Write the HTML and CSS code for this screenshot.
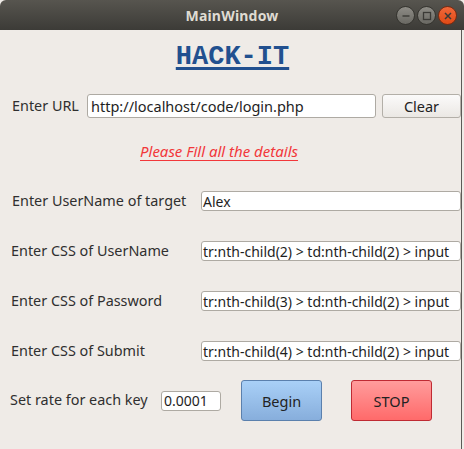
FILE: index.html
```html
<!DOCTYPE html>
<html>
<head>
<meta charset="utf-8">
<link rel="stylesheet" href="styles.css">
</head>
<body>
<div class="window">
  <div class="titlebar">
    <span class="title">MainWindow</span>
    <div class="controls">
      <span class="wbtn"><svg width="16" height="16" viewBox="0 0 16 16"><line x1="4.5" y1="8" x2="11.5" y2="8" stroke="#3b3a36" stroke-width="1.4"/></svg></span>
      <span class="wbtn"><svg width="16" height="16" viewBox="0 0 16 16"><rect x="4.5" y="4.5" width="7" height="7" fill="none" stroke="#3b3a36" stroke-width="1.3"/></svg></span>
      <span class="wbtn close"><svg width="16" height="16" viewBox="0 0 16 16"><path d="M5 5 L11 11 M11 5 L5 11" stroke="#3b3a36" stroke-width="1.5"/></svg></span>
    </div>
  </div>
  <div class="content">
    <div class="heading"><span class="brand">HACK-IT</span></div>
    <div class="row url-row">
      <span class="label url-label">Enter URL</span>
      <div class="field url-field">http://localhost/code/login.php</div>
      <div class="btn clear">Clear</div>
    </div>
    <div class="error-row"><span class="error">Please Fill all the details</span></div>
    <div class="row form-row first">
      <span class="label wide">Enter UserName of target</span>
      <div class="field small">Alex</div>
    </div>
    <div class="row form-row">
      <span class="label wide css">Enter CSS of UserName</span>
      <div class="field small">tr:nth-child(2) &gt; td:nth-child(2) &gt; input</div>
    </div>
    <div class="row form-row">
      <span class="label wide css">Enter CSS of Password</span>
      <div class="field small">tr:nth-child(3) &gt; td:nth-child(2) &gt; input</div>
    </div>
    <div class="row form-row">
      <span class="label wide css">Enter CSS of Submit</span>
      <div class="field small">tr:nth-child(4) &gt; td:nth-child(2) &gt; input</div>
    </div>
    <div class="row rate-row">
      <span class="label rate-label">Set rate for each key</span>
      <div class="field small rate">0.0001</div>
      <div class="btn begin">Begin</div>
      <div class="btn stop">STOP</div>
    </div>
  </div>
</div>
</body>
</html>
```

FILE: styles.css
```css
html, body {
  margin: 0;
  padding: 0;
  background: #efebe7;
}
body {
  width: 464px;
  height: 449px;
  overflow: hidden;
  font-family: "Noto Sans", "DejaVu Sans", sans-serif;
  font-size: 14px;
  color: #2f2f2f;
}
.window {
  width: 464px;
  height: 449px;
  display: flex;
  flex-direction: column;
}
.titlebar {
  height: 30px;
  flex: none;
  background: linear-gradient(#57554f, #3c3b37);
  border-radius: 6px 6px 0 0;
  position: relative;
  display: flex;
  align-items: center;
  justify-content: center;
}
.title {
  color: #dfdbd2;
  font-weight: bold;
  font-size: 14px;
  letter-spacing: 0.2px;
}
.controls {
  position: absolute;
  right: 7px;
  top: 6px;
  display: flex;
  gap: 2px;
}
.wbtn {
  width: 19px;
  height: 19px;
  border-radius: 50%;
  background: linear-gradient(#8e8c86, #696862);
  border: 1px solid #35342f;
  box-sizing: border-box;
  display: flex;
  align-items: center;
  justify-content: center;
}
.wbtn svg { display: block; }
.wbtn.close {
  background: linear-gradient(#f1683a, #df4a16);
  border-color: #7a2a10;
}
.content {
  flex: 1;
  background: #efebe7;
  border-right: 1px solid #5c5b57;
  width: 461px;
  display: flex;
  flex-direction: column;
}
.heading {
  margin-top: 12px;
  height: 30px;
  display: flex;
  justify-content: center;
}
.brand {
  font-family: "Liberation Mono", "Courier New", monospace;
  font-weight: bold;
  font-size: 27px;
  line-height: 30px;
  color: #22508f;
  text-decoration: underline;
  text-decoration-thickness: 3px;
  text-underline-offset: 3px;
  margin-left: 4px;
}
.row {
  display: flex;
  align-items: center;
}
.url-row {
  margin-top: 22px;
  height: 24px;
  padding-left: 12px;
}
.label {
  white-space: nowrap;
  font-size: 14.4px;
  position: relative;
  top: -1px;
}
.url-label { width: 75px; flex: none; }
.field {
  background: #fff;
  border: 1px solid #aeaaa3;
  border-radius: 3px;
  box-sizing: border-box;
  white-space: nowrap;
  overflow: hidden;
  display: flex;
  align-items: center;
  color: #1e1e1e;
}
.url-field {
  width: 289px;
  height: 24px;
  padding-left: 3px;
  font-size: 14.5px;
}
.btn {
  box-sizing: border-box;
  display: flex;
  align-items: center;
  justify-content: center;
  border-radius: 3px;
  color: #222;
  font-size: 14.5px;
}
.clear {
  margin-left: 6px;
  width: 79px;
  height: 24px;
  border: 1px solid #b3afa8;
  background: linear-gradient(#fbfafa, #ebe8e4);
}
.error-row {
  margin-top: 22px;
  height: 22px;
  display: flex;
  align-items: center;
  padding-left: 140px;
}
.error {
  color: #f2373a;
  font-style: italic;
  font-size: 15px;
  text-decoration: underline;
  text-underline-offset: 3px;
}
.form-row {
  margin-top: 30px;
  height: 20px;
  padding-left: 12px;
}
.form-row.first { margin-top: 29px; }
.wide { width: 189px; flex: none; }
.wide.css { margin-left: -1px; width: 190px; }
.small {
  height: 20px;
  width: 260px;
  padding-left: 1px;
  font-size: 14px;
}
.rate-row {
  margin-top: 19px;
  height: 41px;
  padding-left: 10px;
}
.rate-label { width: 151px; flex: none; }
.field.rate {
  width: 60px;
  padding-left: 2px;
}
.begin {
  margin-left: 20px;
  width: 81px;
  height: 41px;
  border: 1px solid #5b80ad;
  background: linear-gradient(#a9d0f7, #87aedc);
}
.stop {
  margin-left: 29px;
  width: 81px;
  height: 41px;
  border: 1px solid #bf2a33;
  background: linear-gradient(#ff9c9c, #ff6a6a);
}
```
